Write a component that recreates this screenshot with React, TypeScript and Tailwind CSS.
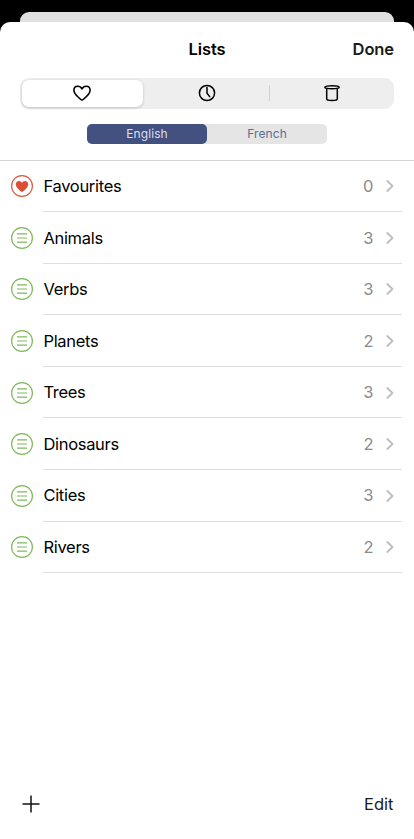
import React, { useState } from 'react';

type WordList = { name: string; count: number; favourite?: boolean };

const LISTS: WordList[] = [
  { name: 'Favourites', count: 0, favourite: true },
  { name: 'Animals', count: 3 },
  { name: 'Verbs', count: 3 },
  { name: 'Planets', count: 2 },
  { name: 'Trees', count: 3 },
  { name: 'Dinosaurs', count: 2 },
  { name: 'Cities', count: 3 },
  { name: 'Rivers', count: 2 },
];

const HeartIcon = () => (
  <svg width="20" height="20" viewBox="0 0 20 20" fill="none" stroke="#000" strokeWidth="1.6" strokeLinejoin="round">
    <path d="M10 17.1C9.6 17.1 1.9 11.6 1.9 7.2C1.9 4.8 3.6 3.2 5.8 3.2C7.7 3.2 9.2 4.2 10 5.8C10.8 4.2 12.3 3.2 14.2 3.2C16.4 3.2 18.1 4.8 18.1 7.2C18.1 11.6 10.4 17.1 10 17.1Z" />
  </svg>
);

const ClockIcon = () => (
  <svg width="20" height="20" viewBox="0 0 20 20" fill="none" stroke="#000" strokeWidth="1.5" strokeLinecap="round">
    <circle cx="10" cy="10" r="7.6" />
    <path d="M10 4.6V10.3L12.7 13.6" />
  </svg>
);

const BinIcon = () => (
  <svg width="20" height="20" viewBox="0 0 20 20" fill="none" stroke="#000" strokeWidth="1.5">
    <ellipse cx="10" cy="4.3" rx="7.2" ry="1.5" />
    <path d="M4.7 5.2V15.9C4.7 16.8 6.6 17.4 10 17.4C13.4 17.4 15.3 16.8 15.3 15.9V5.2" />
  </svg>
);

const FavouriteBadge = () => (
  <svg width="24" height="24" viewBox="0 0 24 24" fill="none">
    <circle cx="12" cy="12" r="10.4" stroke="#dc5a42" strokeWidth="1.2" />
    <path d="M12 18.2C9 16 5.8 13.2 5.8 10.3C5.8 8.3 7.2 7 8.9 7C10.3 7 11.4 7.7 12 8.9C12.6 7.7 13.7 7 15.1 7C16.8 7 18.2 8.3 18.2 10.3C18.2 13.2 15 16 12 18.2Z" fill="#dc4f35" />
  </svg>
);

const ListBadge = () => (
  <svg width="24" height="24" viewBox="0 0 24 24" fill="none" stroke="#80b95b">
    <circle cx="12" cy="12" r="10.4" strokeWidth="1.2" />
    <path d="M7 7.8H17M7 12H17M7 16.2H17" strokeWidth="1.2" />
  </svg>
);

const Chevron = () => (
  <svg width="8" height="14" viewBox="0 0 8 14" fill="none" stroke="#bdbdbf" strokeWidth="1.8" strokeLinecap="round" strokeLinejoin="round">
    <path d="M1.3 2L6.5 7L1.3 12" />
  </svg>
);

const ListRow = ({ list }: { list: WordList }) => (
  <li className="flex h-[51.6px] items-center pl-[10px]">
    <span className="h-6 w-6 shrink-0">{list.favourite ? <FavouriteBadge /> : <ListBadge />}</span>
    <div className="mr-3 ml-[9.4px] flex h-full flex-1 items-center border-b border-[#dededf] pt-px pr-[8.5px]">
      <span className="flex-1 text-[16.5px] tracking-[-0.3px]">{list.name}</span>
      <span className="mr-3 text-[16.5px] text-[#8a8a8d]">{list.count}</span>
      <Chevron />
    </div>
  </li>
);

const App = () => {
  const [tab, setTab] = useState(0);
  const [language, setLanguage] = useState('English');

  return (
    <div className="flex h-[839px] w-[414px] flex-col overflow-hidden bg-black pt-[11.5px] font-['Inter',sans-serif] text-black">
      <div className="mx-5 h-[10px] shrink-0 rounded-t-[9px] bg-[#e0e0e0]" />
      <div className="flex flex-1 flex-col rounded-t-[10px] bg-white">
        <header className="flex h-[139px] shrink-0 flex-col border-b border-[#d5d5d6]">
          <div className="grid h-[56px] shrink-0 grid-cols-3 items-center px-5 text-[16.5px] font-semibold">
            <h1 className="col-start-2 text-center tracking-[-0.1px]">Lists</h1>
            <button className="text-right tracking-[-0.1px] text-[#1b1b1b]">Done</button>
          </div>

          <div className="mx-5 grid h-[31px] shrink-0 grid-cols-3 rounded-[9px] bg-[#eeeeee] py-[2px]">
            {[HeartIcon, ClockIcon, BinIcon].map((Icon, i) => (
              <div key={i} className="flex items-center">
                <span className={i === 0 || tab === i || tab === i - 1 ? 'h-4 w-px' : 'h-4 w-px bg-[#d2d2d4]'} />
                <button
                  onClick={() => setTab(i)}
                  className={
                    tab === i
                      ? 'mr-[2px] ml-px flex h-full flex-1 items-center justify-center rounded-[7px] bg-white shadow-[0_1px_3px_rgba(0,0,0,0.2)]'
                      : 'mr-px flex h-full flex-1 items-center justify-center'
                  }
                >
                  <Icon />
                </button>
              </div>
            ))}
          </div>

          <div className="mx-auto mt-[15px] flex h-5 w-60 shrink-0 rounded-[5px] bg-[#e5e5e5] text-[12px] tracking-[0.1px]">
            {['English', 'French'].map((name) => (
              <button
                key={name}
                onClick={() => setLanguage(name)}
                className={
                  language === name
                    ? 'flex-1 rounded-[5px] bg-[#42517f] text-[#dcdfec]'
                    : 'flex-1 text-[#5f6b91]'
                }
              >
                {name}
              </button>
            ))}
          </div>
        </header>

        <ul className="flex-1">
          {LISTS.map((list) => (
            <ListRow key={list.name} list={list} />
          ))}
        </ul>

        <footer className="flex h-[70px] shrink-0 items-center justify-between pr-[20.5px] pl-[22px]">
          <button aria-label="Add list">
            <svg width="18" height="18" viewBox="0 0 18 18" stroke="#111" strokeWidth="1.5">
              <path d="M0.5 9H17.5M9 0.5V17.5" />
            </svg>
          </button>
          <button className="text-[16.5px] text-[#1b1b1b]">Edit</button>
        </footer>
      </div>
    </div>
  );
};

export default App;
